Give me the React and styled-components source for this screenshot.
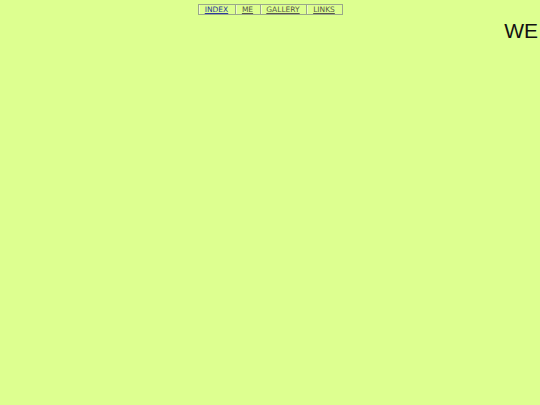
import styled, { createGlobalStyle } from "styled-components"

const GlobalStyle = createGlobalStyle`
  html, body {
    margin: 0;
    padding: 0;
    background-color: #ddff90;
    overflow: hidden;
  }
`

const Page = styled.div`
  width: 540px;
  height: 405px;
  display: flex;
  flex-direction: column;
  align-items: center;
  font-family: "DejaVu Sans", Verdana, sans-serif;
`

const Nav = styled.nav`
  display: flex;
  margin-top: 4px;
  border: 1px solid #9aa88a;
`

const NavItem = styled.a`
  display: block;
  width: ${(p) => p.$w}px;
  height: 9px;
  line-height: 9px;
  text-align: center;
  font-size: 7.5px;
  color: ${(p) => (p.$active ? "#2b3a9a" : "#55584a")};
  text-decoration: underline;
  border-left: 1px solid #9aa88a;
  box-shadow: inset 1px 0 0 #eefcc8;

  &:first-child {
    border-left: none;
  }
`

const Title = styled.h1`
  align-self: flex-end;
  margin: 4px 2px 0 0;
  font-family: "Liberation Sans", Arial, sans-serif;
  font-weight: normal;
  font-size: 21px;
  line-height: 24px;
  color: #111;
  white-space: nowrap;
`

export default function App() {
  return (
    <Page>
      <GlobalStyle />
      <Nav>
        <NavItem $active $w={36} href="#">INDEX</NavItem>
        <NavItem $w={24} href="#">ME</NavItem>
        <NavItem $w={45} href="#">GALLERY</NavItem>
        <NavItem $w={35} href="#">LINKS</NavItem>
      </Nav>
      <Title>WE</Title>
    </Page>
  )
}
